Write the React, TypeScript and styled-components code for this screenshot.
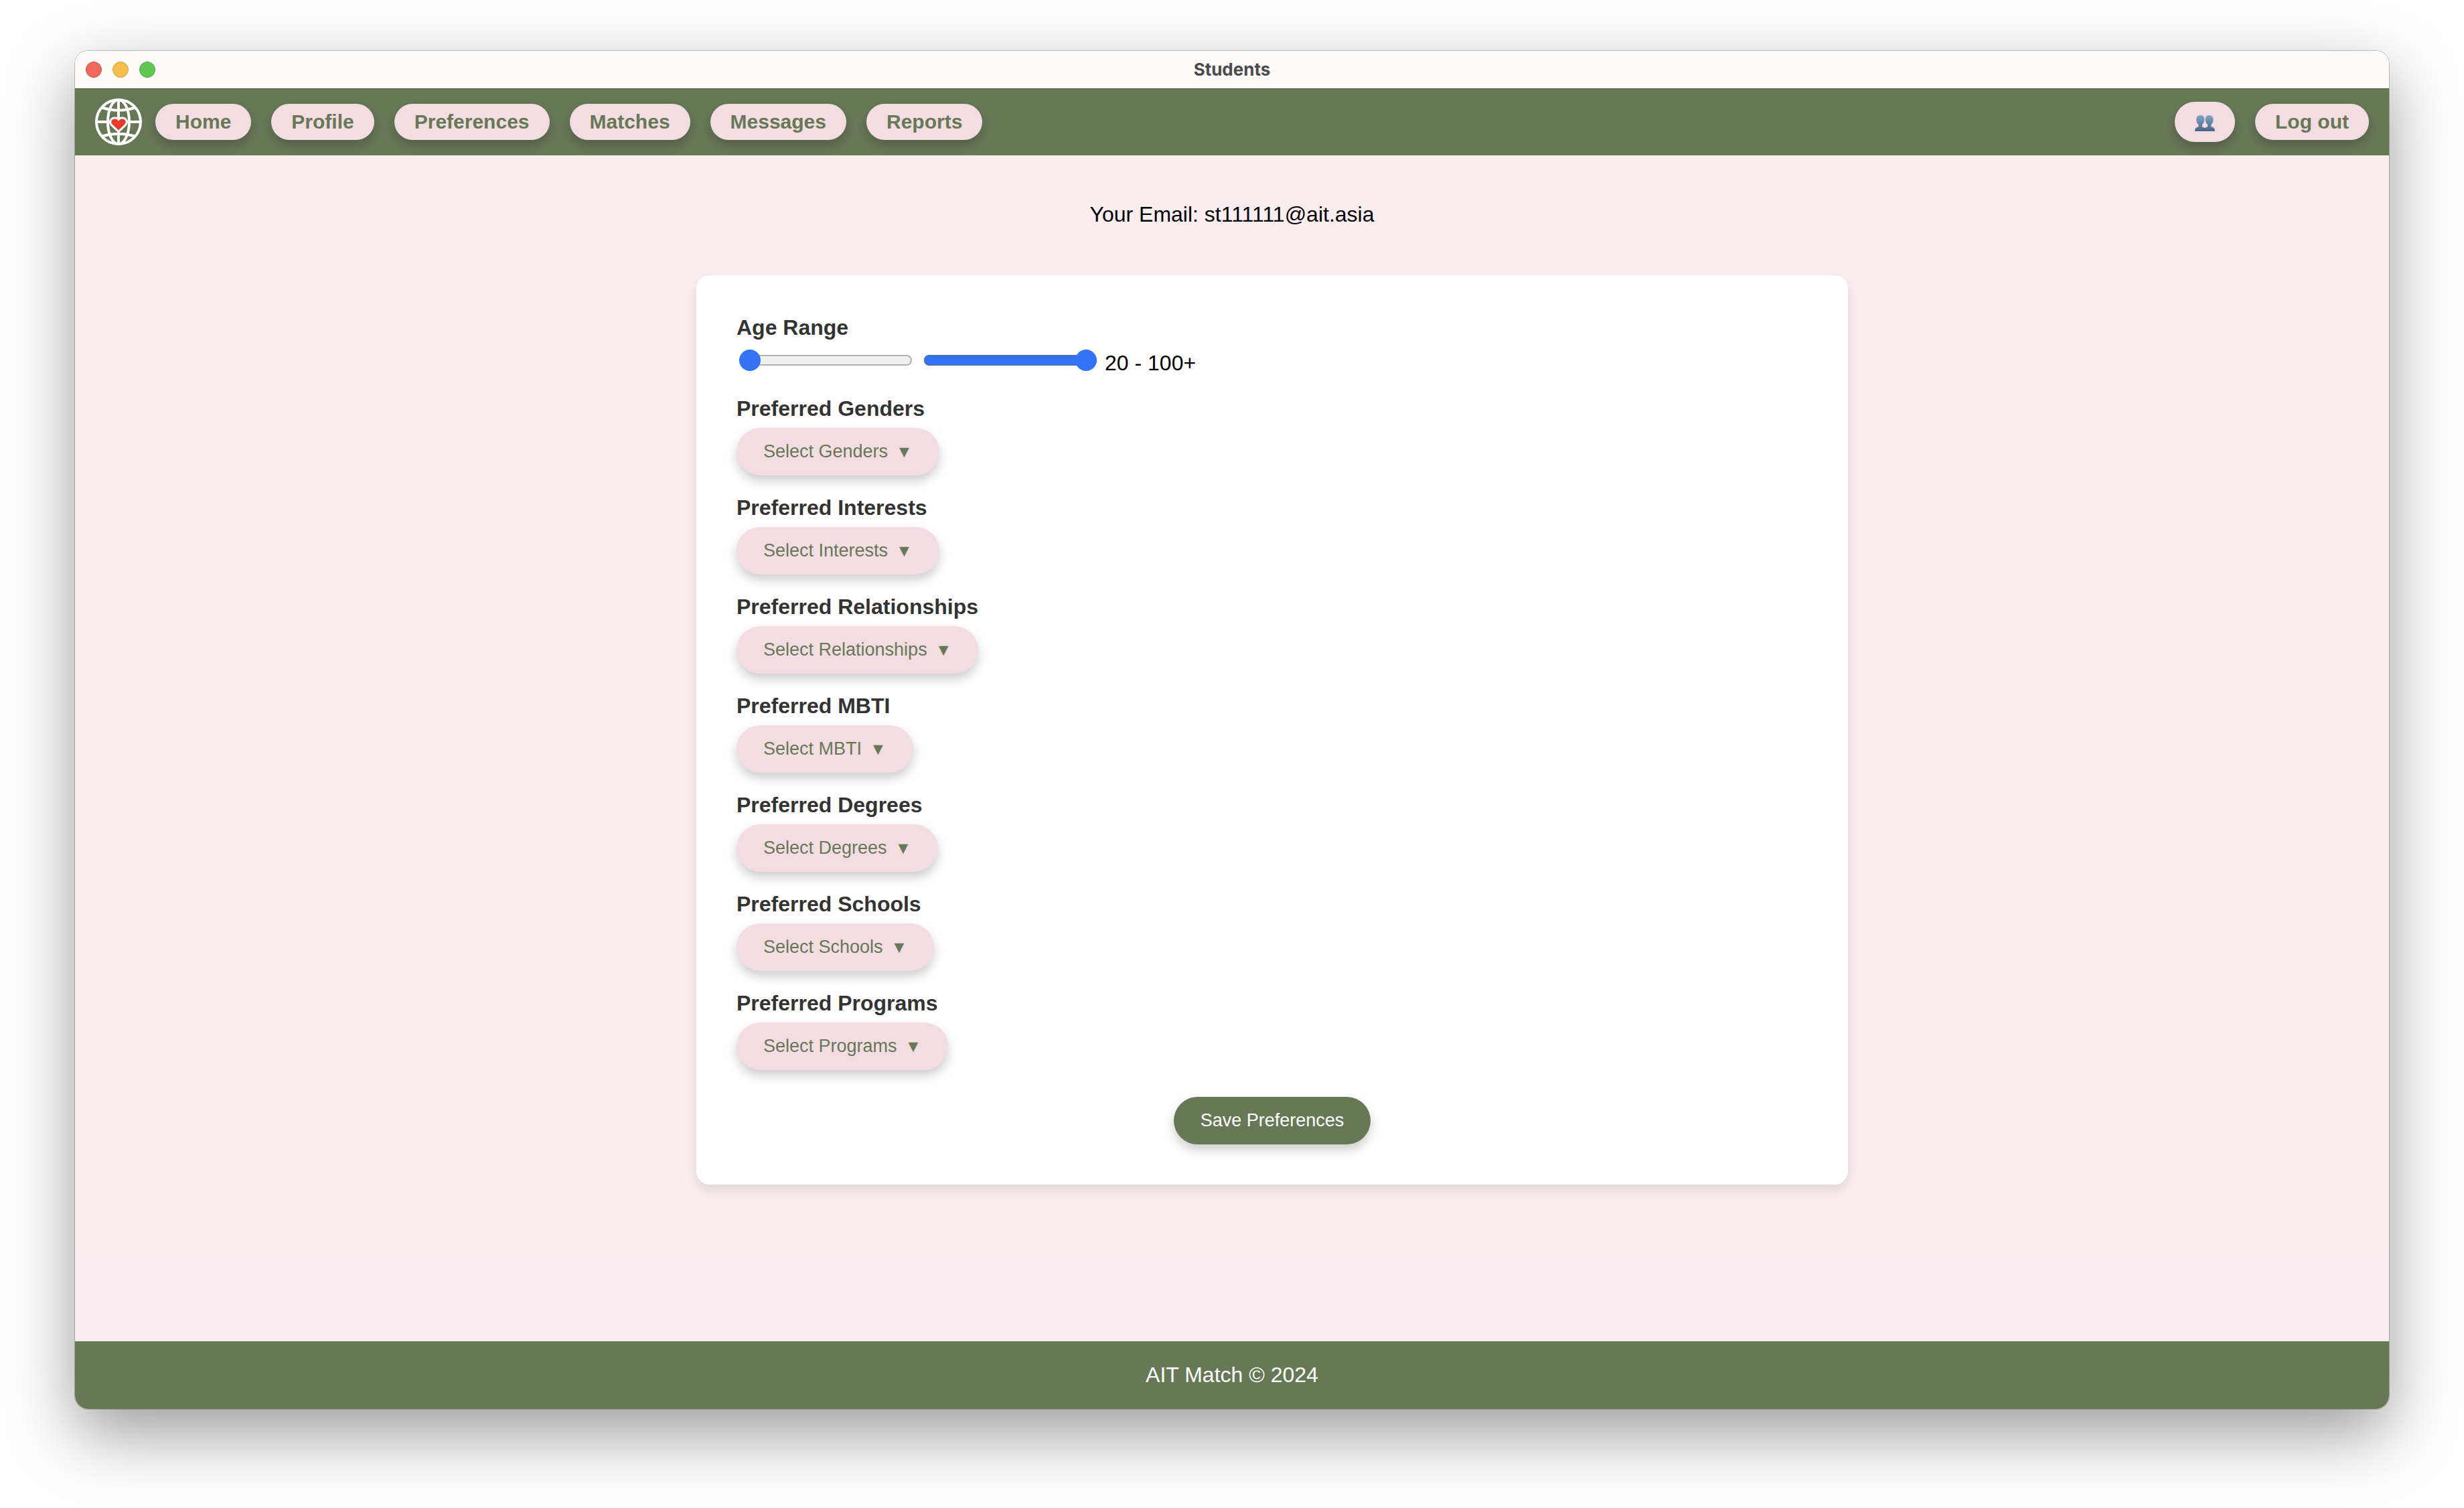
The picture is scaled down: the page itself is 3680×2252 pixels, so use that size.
import React, { useState } from "react";
import styled, { createGlobalStyle, css } from "styled-components";

const sans = `Arial, "Liberation Sans", sans-serif`;
const green = "#677857";
const blush = "#f3dde2";

const GlobalStyle = createGlobalStyle`
  *, *::before, *::after { box-sizing: border-box; }
  body { margin: 0; background: #fff; font-family: ${sans}; font-size: 32px; color: #000; }
  button, input { font-family: inherit; }
`;

const Desktop = styled.div`
  display: flex;
  min-height: 100vh;
  padding: 76px 112px 148px;
`;

const Window = styled.div`
  flex: 1;
  display: flex;
  flex-direction: column;
  overflow: hidden;
  border-radius: 20px;
  background: linear-gradient(to top, #f8ecf0 221px, #faedef 221px);
  box-shadow: 0 0 0 1px rgba(0, 0, 0, 0.22), 0 36px 100px rgba(0, 0, 0, 0.4);
`;

const TitleBar = styled.header`
  display: grid;
  grid-template-columns: 1fr auto 1fr;
  align-items: center;
  height: 56px;
  padding: 0 16px;
  background: #fcfbf9;
`;

const Lights = styled.div`
  display: flex;
  gap: 16px;
`;

const Light = styled.button<{ $fill: string; $edge: string }>`
  width: 24px;
  height: 24px;
  padding: 0;
  border: 1px solid ${(p) => p.$edge};
  border-radius: 50%;
  background: ${(p) => p.$fill};
`;

const WindowTitle = styled.span`
  font-family: Inter, ${sans};
  font-size: 26px;
  font-weight: 700;
  line-height: 32px;
  color: #4b4b4b;
`;

const NavBar = styled.nav`
  display: flex;
  align-items: center;
  gap: 30px;
  height: 100px;
  padding: 0 30px;
  background: ${green};
  box-shadow: inset 0 1px 0 #40502e;
`;

const Brand = styled.a`
  display: flex;
  margin-right: -10px;
`;

const pill = css`
  border: 0;
  border-radius: 40px;
  background: ${blush};
  color: ${green};
  box-shadow: 0 8px 16px rgba(0, 0, 0, 0.2);
  cursor: pointer;
`;

const NavLink = styled.a`
  ${pill}
  padding: 10px 30px;
  font-size: 30px;
  font-weight: 700;
  line-height: 34px;
  text-decoration: none;
`;

const FriendsButton = styled.button`
  ${pill}
  display: flex;
  align-items: center;
  height: 60px;
  margin-left: auto;
  padding: 4px 30px 0;
`;

const Content = styled.main`
  flex: 1;
  display: flex;
  flex-direction: column;
  align-items: center;
  padding: 70px 0 0;
`;

const Email = styled.p`
  margin: 0 0 72px;
  line-height: 37px;
`;

const Card = styled.form`
  display: flex;
  flex-direction: column;
  align-items: flex-start;
  width: 1720px;
  max-width: 100%;
  margin-left: 120px;
  padding: 60px;
  border-radius: 20px;
  background: #fff;
  box-shadow: 0 8px 16px rgba(0, 0, 0, 0.1);
`;

const Label = styled.label`
  margin-bottom: 10px;
  font-size: 32px;
  font-weight: 700;
  line-height: 37px;
  color: #333;
`;

const Field = styled.div`
  display: flex;
  flex-direction: column;
  align-items: flex-start;
  margin-bottom: 30px;
`;

const AgeRow = styled.div`
  display: flex;
  align-items: flex-start;
  gap: 18px;
  padding: 4px 4px 0;
`;

const Range = styled.input<{ $full?: boolean }>`
  appearance: none;
  width: 258px;
  height: 32px;
  margin: 0;
  background: transparent;

  &::-webkit-slider-runnable-track {
    height: 16px;
    border-radius: 8px;
    background: ${(p) => (p.$full ? "#3374f6" : "#efefef")};
    box-shadow: inset 0 0 0 2px ${(p) => (p.$full ? "#4b70c0" : "#b2b2b2")};
  }

  &::-webkit-slider-thumb {
    appearance: none;
    width: 32px;
    height: 32px;
    margin-top: -8px;
    border-radius: 50%;
    background: #3374f6;
  }
`;

const AgeText = styled.output`
  margin-left: -6px;
  line-height: 40px;
`;

const SelectButton = styled.button`
  ${pill}
  display: flex;
  align-items: baseline;
  gap: 12px;
  padding: 20px 40px;
  font-size: 27px;
  line-height: 31px;
`;

const Arrow = styled.span`
  font-size: 25px;
  line-height: 24px;
`;

const SaveButton = styled(SelectButton)`
  align-self: center;
  margin-top: 10px;
  background: ${green};
  color: #fff;
`;

const Footer = styled.footer`
  padding: 32px;
  background: ${green};
  color: #fff;
  line-height: 37px;
  text-align: center;
`;

const Logo = () => (
  <svg width="70" height="70" viewBox="0 0 70 70" fill="none" stroke="#fff" strokeWidth="4" aria-hidden="true">
    <circle cx="35" cy="35" r="33" />
    <ellipse cx="35" cy="35" rx="16" ry="33" />
    <path d="M35 2v66M2 35h66M10 13.500Q35 22 60 13.500M10 56.500Q35 49 60 56.500" />
    <path
      d="M35 47.500L25.500 38.500C22.500 34.500 25.500 30.500 29.500 30.500C32 30.500 34 32 35 34C36 32 38 30.500 40.500 30.500C44.500 30.500 47.500 34.500 44.500 38.500Z"
      fill="#ea3a2d"
      strokeWidth="6"
      strokeLinejoin="round"
      paintOrder="stroke"
    />
  </svg>
);

const People = () => (
  <svg width="30" height="24" viewBox="0 0 30 24" aria-hidden="true">
    <defs>
      <linearGradient id="people" x1="0" y1="0" x2="0" y2="1">
        <stop offset="0" stopColor="#86a5c4" />
        <stop offset="1" stopColor="#456488" />
      </linearGradient>
    </defs>
    <path
      fill="url(#people)"
      d="M8.500 0C12.500 0 14.500 3 14.300 7C14.200 10 13 12.500 11 14V17.500L15 19L19 17.500V14C17 12.500 15.800 10 15.700 7C15.500 3 17.500 0 21.500 0S27.800 3 27.600 7C27.500 10 26.300 12.500 24.500 14V17.500C28 18 30 19.500 30 24H0C0 19.500 2 18 5.500 17.500V14C3.500 12.500 2.300 10 2.200 7C2 3 4.500 0 8.500 0Z"
    />
  </svg>
);

const links = ["Home", "Profile", "Preferences", "Matches", "Messages", "Reports"];
const groups = ["Genders", "Interests", "Relationships", "MBTI", "Degrees", "Schools", "Programs"];

export default function App() {
  const [low, setLow] = useState(20);
  const [high, setHigh] = useState(100);

  return (
    <>
      <GlobalStyle />
      <Desktop>
        <Window>
          <TitleBar>
            <Lights>
              <Light type="button" aria-label="Close" $fill="#ec6a5e" $edge="#d1503f" />
              <Light type="button" aria-label="Minimize" $fill="#f4bf4f" $edge="#d6a03c" />
              <Light type="button" aria-label="Zoom" $fill="#61c554" $edge="#4ea73a" />
            </Lights>
            <WindowTitle>Students</WindowTitle>
          </TitleBar>
          <NavBar>
            <Brand href="#home" aria-label="AIT Match">
              <Logo />
            </Brand>
            {links.map((name) => (
              <NavLink key={name} href={`#${name.toLowerCase()}`}>
                {name}
              </NavLink>
            ))}
            <FriendsButton type="button" aria-label="People">
              <People />
            </FriendsButton>
            <NavLink href="#logout">Log out</NavLink>
          </NavBar>
          <Content>
            <Email>Your Email: st111111@ait.asia</Email>
            <Card onSubmit={(e) => e.preventDefault()}>
              <Field>
                <Label htmlFor="age-low">Age Range</Label>
                <AgeRow>
                  <Range
                    id="age-low"
                    type="range"
                    min={20}
                    max={100}
                    value={low}
                    onChange={(e) => setLow(Number(e.target.value))}
                  />
                  <Range
                    $full
                    type="range"
                    aria-label="Oldest age"
                    min={20}
                    max={100}
                    value={high}
                    onChange={(e) => setHigh(Number(e.target.value))}
                  />
                  <AgeText>
                    {low} - {high === 100 ? "100+" : high}
                  </AgeText>
                </AgeRow>
              </Field>
              {groups.map((name) => (
                <Field key={name}>
                  <Label htmlFor={name}>Preferred {name}</Label>
                  <SelectButton id={name} type="button">
                    <span>Select {name}</span>
                    <Arrow aria-hidden="true">▼</Arrow>
                  </SelectButton>
                </Field>
              ))}
              <SaveButton type="submit">Save Preferences</SaveButton>
            </Card>
          </Content>
          <Footer>AIT Match © 2024</Footer>
        </Window>
      </Desktop>
    </>
  );
}
